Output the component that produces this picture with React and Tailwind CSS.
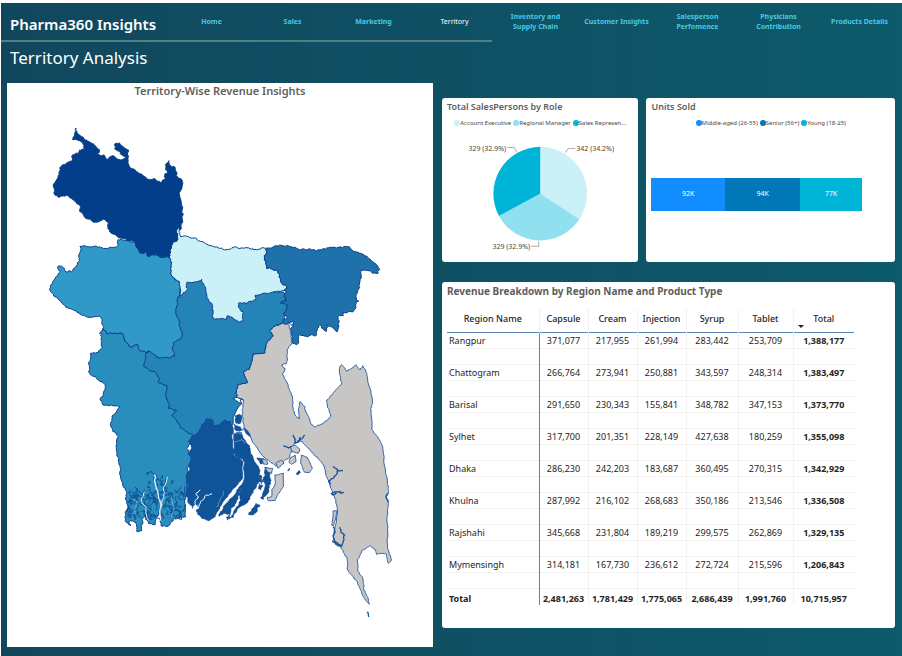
const NAV = [
  ['Home'],
  ['Sales'],
  ['Marketing'],
  ['Territory'],
  ['Inventory and', 'Supply Chain'],
  ['Customer Insights'],
  ['Salesperson', 'Perfomence'],
  ['Physicians', 'Contribution'],
  ['Products Details'],
];

const COLUMNS = ['Capsule', 'Cream', 'Injection', 'Syrup', 'Tablet', 'Total'];

const ROWS = [
  ['Rangpur', '371,077', '217,955', '261,994', '283,442', '253,709', '1,388,177'],
  ['Chattogram', '266,764', '273,941', '250,881', '343,597', '248,314', '1,383,497'],
  ['Barisal', '291,650', '230,343', '155,841', '348,782', '347,153', '1,373,770'],
  ['Sylhet', '317,700', '201,351', '228,149', '427,638', '180,259', '1,355,098'],
  ['Dhaka', '286,230', '242,203', '183,687', '360,495', '270,315', '1,342,929'],
  ['Khulna', '287,992', '216,102', '268,683', '350,186', '213,546', '1,336,508'],
  ['Rajshahi', '345,668', '231,804', '189,219', '299,575', '262,869', '1,329,135'],
  ['Mymensingh', '314,181', '167,730', '236,612', '272,724', '215,596', '1,206,843'],
];

const TOTALS = ['2,481,263', '1,781,429', '1,775,065', '2,686,439', '1,991,760', '10,715,957'];

const UNITS = [
  { label: 'Middle-aged (26-55)', value: 92, color: 'bg-[#118dff]' },
  { label: 'Senior (56+)', value: 94, color: 'bg-[#0077b6]' },
  { label: 'Young (18-25)', value: 77, color: 'bg-[#00b4d8]' },
];

const ROLES = [
  { label: 'Account Executive', color: 'bg-[#caf0f8]' },
  { label: 'Regional Manager', color: 'bg-[#90e0ef]' },
  { label: 'Sales Represen...', color: 'bg-[#00b4d8]' },
];

/* ---------- map geometry ---------- */

// Repeatable noise in the range -1..1, so neighbours share the same ragged border.
const noise = (a, b) => {
  const s = Math.sin(a * 12.9898 + b * 78.233) * 43758.5453;
  return (s - Math.floor(s)) * 2 - 1;
};

const subdivide = (pts, closed, amp) => {
  const out = [];
  const n = closed ? pts.length : pts.length - 1;
  for (let i = 0; i < n; i++) {
    const p = pts[i];
    const q = pts[(i + 1) % pts.length];
    out.push(p);
    if (Math.hypot(q[0] - p[0], q[1] - p[1]) > 6) {
      const sx = Math.round(p[0] + q[0]);
      const sy = Math.round(p[1] + q[1]);
      out.push([sx / 2 + noise(sx, sy) * amp, sy / 2 + noise(sy, sx) * amp]);
    }
  }
  if (!closed) out.push(pts[pts.length - 1]);
  return out;
};

const outline = (text, dx, dy, { closed = true, amp = 3 } = {}) => {
  let pts = text.split(' ').map((pair) => {
    const [x, y] = pair.split(',').map(Number);
    return [x + dx, y + dy];
  });
  if (amp) {
    pts = subdivide(pts, closed, amp * 0.8);
    pts = subdivide(pts, closed, amp * 0.9);
    pts = subdivide(pts, closed, amp * 0.7);
  }
  return 'M' + pts.map((p) => p[0].toFixed(1) + ' ' + p[1].toFixed(1)).join('L') + (closed ? 'Z' : '');
};

const DHAKA =
  '541,888 552,868 562,845 610,838 640,880 720,905 760,880 850,876 862,920 850,970 830,990 850,1080 760,1190 708,1192 725,1208 710,1230 700,1250 700,1268 690,1300 570,1320 520,1260 470,1160 430,1110 435,1055 500,1030 500,900 530,894';

const RAJSHAHI =
  '245,358 285,368 292,385 302,400 318,396 325,410 345,404 360,412 388,413 392,435 392,460 405,480 418,485 420,525 412,535 410,560 410,590 418,600 420,625 428,640 424,654 400,668 397,690 405,708 385,714 350,712 330,694 318,698 302,694 292,674 270,680 255,665 245,640 215,640 200,640 188,628 186,602 178,588 150,592 110,576 75,557 45,530 28,508 32,495 45,475 60,455 53,440 65,438 75,452 95,455 108,440 118,415 120,378 150,382 165,378 195,385 230,380 233,362';

const RANGPUR =
  '108,25 111,38 125,50 135,60 150,66 165,77 178,95 168,108 190,105 200,118 215,108 232,118 250,117 258,110 246,106 238,94 224,87 223,73 236,69 250,80 266,94 264,115 270,142 295,158 320,178 345,176 362,188 372,180 374,162 383,158 377,145 380,130 387,122 391,136 406,145 412,170 427,182 426,200 418,222 428,262 427,300 420,330 415,320 410,338 411,362 398,370 390,392 388,413 360,412 345,404 325,410 318,396 302,400 292,385 285,368 270,362 245,356 230,348 212,338 204,322 206,308 192,298 170,307 140,296 122,276 122,260 100,240 80,226 55,232 43,222 40,198 48,180 58,165 60,142 78,132 98,122 98,105 118,90 135,86 130,65 112,60 97,58';

const KHULNA =
  '188,118 200,130 215,130 245,130 255,155 270,170 292,164 302,184 318,188 325,182 318,200 312,225 325,238 345,245 358,265 355,278 380,285 378,320 390,345 385,355 410,362 395,375 420,408 445,430 458,436 455,460 440,475 450,490 455,510 445,530 440,560 440,600 437,625 437,680 400,688 385,708 364,708 362,690 362,650 345,705 325,700 318,680 306,685 305,722 290,724 285,695 265,695 272,708 255,692 256,670 268,655 256,625 260,608 245,575 242,540 235,510 228,470 235,440 222,425 213,410 216,378 240,350 215,345 190,345 180,330 190,310 196,285 175,270 150,250 148,215 152,190 175,188 187,172 185,140 178,130';

const MYMENSINGH_INLAND =
  '60,85 80,88 110,82 150,86 165,88 200,85 195,105 200,145 232,152 238,168 245,190 260,200 255,212 240,215 200,220 170,226 165,240 140,250 118,248 115,258 130,275 130,302 118,306 105,300 85,287 75,298 45,298 38,285 38,260 20,232 15,200 5,178 -10,185 -40,188 -38,208 -60,227 -62,185 -75,180 -88,160 -88,135 -92,113 -90,92 -82,70 -69,62 -70,38 -65,20 -62,30 -58,50 -35,50 -10,58 20,72';

const SYLHET =
  '200,85 235,78 262,76 300,90 325,87 350,92 380,84 410,84 440,80 465,95 500,108 540,148 535,158 520,160 495,150 483,150 484,175 478,200 472,220 468,240 476,243 468,245 468,262 458,276 428,278 430,288 418,285 415,310 412,335 400,325 380,315 378,335 358,315 352,325 350,345 325,350 295,345 292,372 278,370 275,345 272,325 282,312 262,312 245,310 250,298 262,290 250,282 260,270 262,255 242,250 258,240 250,228 255,212 260,200 245,190 238,168 232,152 200,145 195,105';

const CHATTOGRAM =
  '245,310 268,316 272,340 275,370 262,390 262,420 258,432 245,435 255,445 248,465 265,495 275,525 280,565 285,585 298,597 295,570 300,545 315,560 330,605 345,622 370,610 393,590 385,565 380,540 400,518 425,493 418,450 424,434 440,454 455,445 468,434 480,450 488,437 497,450 505,490 518,550 512,565 515,628 535,655 548,680 552,730 562,790 566,820 558,825 565,850 561,890 562,970 574,1020 565,1030 557,1000 530,1003 525,988 512,978 485,992 472,1018 472,1050 488,1075 490,1105 502,1130 508,1153 490,1130 472,1085 443,1050 440,1010 422,982 408,975 400,950 405,920 412,870 403,830 390,790 380,770 370,735 340,700 310,670 300,662 285,670 275,685 265,715 245,730 235,742 210,725 185,705 160,670 148,640 132,620 128,580 128,555 132,540 110,530 108,520 115,492 143,488 130,455 148,448 155,425 158,402 195,398 200,370 220,348 208,332 230,315';

const BARISAL = [
  '65,168 75,165 88,150 100,130 110,118 130,120 132,138 152,132 165,120 182,128 190,148 186,165 190,225 219,245 218,295 180,340 150,380 135,410 120,420 95,415 80,395 88,380 75,370 68,385 57,370 50,350 52,300 48,290 60,270 58,250 65,235 55,220 65,200 55,185',
  '190,160 215,158 225,180 240,215 268,268 264,310 240,350 228,368 208,378 210,350 222,300 225,245 195,225',
  '218,312 208,345 190,380 180,405 165,400 146,408 160,380 200,335',
  '238,352 220,376 204,385 190,412 184,412 200,380 212,372',
  '274,310 282,290 285,262 300,280 302,310 296,330 280,358 272,352 285,325 283,300',
  '268,286 276,290 272,306 266,300',
  '268,312 278,316 272,330 266,326',
  '248,385 258,370 269,375 262,392 250,404 236,404',
  '262,234 278,236 290,250 272,252',
  '196,108 206,104 215,112 210,130 198,130',
  '222,144 236,152 242,172 228,160',
  '226,190 238,196 242,214 232,208',
  '192,132 206,140 218,150 200,152',
  '170,412 178,404 182,412 172,420',
];

const GREY_ISLANDS = [
  '315,285 340,280 340,320 320,350 315,362 295,362 292,352 305,350 305,330 315,315',
  '395,226 412,232 427,265 418,278 402,275 392,250',
  '362,200 375,195 390,208 385,220 365,215',
  '360,235 375,225 378,245 365,253 358,248',
  '318,250 335,240 342,250 325,265',
  '286,262 308,265 305,280 293,275',
  '275,236 290,242 294,252 280,252',
];

const CREEKS = [
  '150,402 146,392 160,385 172,368 174,360 160,350',
  '172,362 187,362',
  '154,430 170,426 180,424 182,430 190,427',
  '156,433 168,430',
  '160,532 166,545 160,560 166,575 184,590 190,572 194,556 184,548 180,533',
  '158,573 166,580 180,586',
  '12,288 26,294 34,290',
  '40,256 46,268 44,278 56,276 60,262',
  '54,272 66,266 73,256',
  '322,432 318,440 325,455',
  '262,787 265,790 266,799',
  '24,362 28,356',
  '50,372 58,363 60,368 52,373',
];

const buildMangroves = () => {
  const lines = [];
  for (let i = 0; i < 120; i++) {
    let x = 262 + ((noise(i, 3) + 1) / 2) * 172;
    const top = x < 320 ? 588 : x < 345 ? 548 : x < 400 ? 560 : 590;
    let y = top + ((noise(3, i) + 1) / 2) * (680 - top);
    const pts = [[x, y]];
    for (let k = 0; k < 5; k++) {
      x += noise(i + 11, k + 1) * 7;
      y += 2 + noise(k + 1, i + 7) * 8;
      x = Math.min(434, Math.max(260, x));
      y = Math.min(688, y);
      pts.push([x, y]);
    }
    lines.push('M' + pts.map((p) => (p[0] + 120).toFixed(1) + ' ' + (p[1] + 870).toFixed(1)).join('L'));
  }
  return lines.join('');
};

const MANGROVES = buildMangroves();

function TerritoryMap() {
  return (
    <svg viewBox="21 297 1278 1644" className="block w-full" role="img" aria-label="Territory map" strokeLinejoin="round" strokeLinecap="round">
      <g stroke="#0b3f8c" strokeWidth="3">
        <path d={outline(DHAKA, 0, 0, { amp: 2 })} fill="#2483b7" />
        <path d={outline(MYMENSINGH_INLAND, 600, 660)} fill="#caf0f8" />
        <path d={outline(RAJSHAHI, 120, 360)} fill="#3099c7" />
        <path d={outline(RANGPUR, 120, 360)} fill="#023e8a" />
        <path d={outline(KHULNA, 120, 870)} fill="#2a8ebd" />
        <path d={outline(SYLHET, 600, 660)} fill="#1e71ab" />
      </g>
      <path d={MANGROVES} fill="none" stroke="#0f5499" strokeWidth="3" />
      <g fill="none" stroke="#e6f0f8" strokeWidth="4">
        <path d={outline('362,690 362,640 352,600 344,575 344,555', 120, 870, { closed: false })} />
        <path d={outline('362,650 372,625 370,600 382,562', 120, 870, { closed: false })} strokeWidth="3" />
        <path d={outline('325,690 318,655 305,625 315,605', 120, 870, { closed: false })} strokeWidth="3" />
        <path d={outline('290,690 285,660 292,635 272,625', 120, 870, { closed: false })} strokeWidth="1" />
        <path d={outline('395,680 402,655 395,620', 120, 870, { closed: false })} strokeWidth="1" />
      </g>
      <g stroke="#0b3f8c" strokeWidth="2">
        {BARISAL.map((points) => (
          <path key={points} d={outline(points, 510, 1140)} fill="#0f5499" />
        ))}
      </g>
      <g fill="none" stroke="#ffffff" strokeWidth="3">
        <path d={outline('75,370 85,350 78,340 90,330', 510, 1140, { closed: false })} />
        <path d={outline('84,386 95,362 110,345 125,342', 510, 1140, { closed: false })} />
        <path d={outline('160,335 148,365 140,380', 510, 1140, { closed: false })} strokeWidth="1" />
        <path d={outline('186,165 205,158 222,160', 510, 1140, { closed: false })} strokeWidth="1" />
        <path d={outline('196,185 215,178 226,190', 510, 1140, { closed: false })} strokeWidth="1" />
      </g>
      <g stroke="#2f62a6" strokeWidth="3" fill="#c8c6c4">
        <path d={outline(CHATTOGRAM, 600, 660, { amp: 2 })} />
        {GREY_ISLANDS.map((points) => (
          <path key={points} d={outline(points, 510, 1140, { amp: 1 })} />
        ))}
        <path d={outline('160,483 170,482 168,500 160,528 155,525 158,505', 840, 1050, { amp: 1 })} />
      </g>
      <g fill="#ffffff" stroke="#0b3f8c" strokeWidth="3">
        <path d={outline('190,55 202,52 218,58 210,60 216,72 204,66', 510, 1140, { amp: 1 })} />
        <path d={outline('266,308 282,305 276,316', 600, 660, { amp: 1 })} />
      </g>
      <path
        d={outline('245,310 230,315 208,332 220,348 200,370 195,398 158,402 155,425 148,448 130,455 143,488 115,492 108,520 110,530', 600, 660, { closed: false, amp: 2 })}
        fill="none"
        stroke="#0b3f8c"
        strokeWidth="3"
      />
      <g fill="none" stroke="#1b5299" strokeWidth="4">
        {CREEKS.map((points) => (
          <path key={points} d={outline(points, 840, 1050, { closed: false, amp: 2 })} />
        ))}
      </g>
    </svg>
  );
}

function Legend({ items }) {
  return (
    <ul className="flex justify-center gap-[2px] text-[6px] leading-[8px] text-[#484644]">
      {items.map((item) => (
        <li key={item.label} className="flex items-center whitespace-nowrap">
          <span className={`size-[6px] rounded-full ${item.color}`} />
          {item.label}
        </li>
      ))}
    </ul>
  );
}

function RolePie() {
  return (
    <svg viewBox="442 131 196 131" className="block w-full" role="img" aria-label="Sales persons by role">
      <path d="M540 193.5V146.8A46.7 46.7 0 0 1 579.1 219Z" fill="#caf0f8" />
      <path d="M540 193.5L579.1 219A46.7 46.7 0 0 1 498.9 215.7Z" fill="#90e0ef" />
      <path d="M540 193.5L498.9 215.7A46.7 46.7 0 0 1 540 146.8Z" fill="#00b4d8" />
      <g fill="none" stroke="#b3b0ad">
        <path d="M507 147.5H514L517 152.5" />
        <path d="M575 148.5H568L565 152.5" />
        <path d="M531 246H538.5V241" />
      </g>
      <g fill="#484644" fontSize="7">
        <text x="506" y="151" textAnchor="end">329 (32.9%)</text>
        <text x="576" y="151">342 (34.2%)</text>
        <text x="530" y="249" textAnchor="end">329 (32.9%)</text>
      </g>
    </svg>
  );
}

function RevenueTable() {
  return (
    <table className="w-full table-fixed border-collapse text-center text-[9px] leading-[12px] text-[#252423]">
      <colgroup>
        <col className="w-[92px]" />
        <col className="w-[49px]" />
        <col className="w-[49px]" />
        <col className="w-[49px]" />
        <col className="w-[52px]" />
        <col className="w-[55px]" />
        <col className="w-[61px]" />
      </colgroup>
      <thead>
        <tr className="h-[23px] border-b border-[#5b83b5]">
          <th scope="col" className="border-r border-[#f3f2f1] p-0 pb-1 font-medium">Region Name</th>
          {COLUMNS.map((name) => (
            <th key={name} scope="col" className="relative border-r border-[#f3f2f1] p-0 pb-1 font-medium last:border-r-0">
              {name === 'Total' && (
                <svg viewBox="0 0 6 3" className="absolute bottom-1 left-1 h-[3px] w-[6px]" aria-hidden="true">
                  <path d="M0 0H6L3 3Z" fill="#252423" />
                </svg>
              )}
              {name}
            </th>
          ))}
        </tr>
      </thead>
      {ROWS.map(([region, ...values]) => (
        <tbody key={region}>
          <tr className="h-4 border-b border-[#f3f2f1]">
            <th scope="row" className="border-r border-[#5b83b5] p-0 pt-[2px] pl-[2px] text-left font-normal">{region}</th>
            {values.map((value, i) => (
              <td key={COLUMNS[i]} className="border-r border-[#f3f2f1] p-0 pt-[2px] last:border-r-0 last:font-bold">{value}</td>
            ))}
          </tr>
          <tr className="h-4 border-b border-[#f3f2f1]" aria-hidden="true">
            <td className="border-r border-[#5b83b5] p-0" />
            {COLUMNS.map((name) => (
              <td key={name} className="border-r border-[#f3f2f1] p-0 last:border-r-0" />
            ))}
          </tr>
        </tbody>
      ))}
      <tfoot>
        <tr className="h-[17px] font-bold">
          <th scope="row" className="border-r border-[#5b83b5] p-0 pt-[3px] pl-[2px] text-left">Total</th>
          {TOTALS.map((value, i) => (
            <td key={COLUMNS[i]} className="border-r border-[#f3f2f1] p-0 pt-[3px] last:border-r-0">{value}</td>
          ))}
        </tr>
      </tfoot>
    </table>
  );
}

export default function App() {
  return (
    <div className="min-h-screen bg-white pt-[3px] pl-px font-['Noto_Sans','Open_Sans',sans-serif]">
      <div className="min-h-[calc(100vh-3px)] bg-linear-to-r from-[#11475d] to-[#0c5a6b] pb-[9px]">
        <header>
          <div className="flex h-[37px] items-center">
            <div className="w-[170px] shrink-0 pt-1 pl-[9px] text-[15px] leading-5 font-semibold whitespace-nowrap text-white">Pharma360 Insights</div>
            <nav className="grid flex-1 grid-cols-9 items-center pt-px pr-[2px] text-center text-[7px] leading-[10px]">
              {NAV.map((lines) => (
                <a
                  key={lines[0]}
                  href="#"
                  aria-current={lines[0] === 'Territory' ? 'page' : undefined}
                  className="font-bold whitespace-nowrap text-[#48cae4] aria-[current=page]:font-normal aria-[current=page]:text-white"
                >
                  {lines.map((line) => (
                    <span key={line} className="block">{line}</span>
                  ))}
                </a>
              ))}
            </nav>
          </div>
          <div className="h-[2px] w-6/11 bg-[#4f8086]" />
          <h1 className="pt-1 pb-[13px] pl-[9px] text-[17px] leading-6 text-white">Territory Analysis</h1>
        </header>

        <main className="grid grid-cols-[426fr_453fr] items-start gap-[9px] pr-[7px] pl-[6px]">
          <section className="bg-white">
            <h2 className="text-center text-[11px] leading-[16px] font-semibold text-[#605e5c]">Territory-Wise Revenue Insights</h2>
            <TerritoryMap />
          </section>

          <div className="grid gap-5 pt-[15px]">
            <div className="grid grid-cols-[196fr_248fr] gap-2">
              <section className="rounded-[3px] bg-white">
                <h2 className="px-[5px] pt-px text-[9px] leading-[16px] font-semibold text-[#605e5c]">Total SalesPersons by Role</h2>
                <div className="py-1">
                  <Legend items={ROLES} />
                </div>
                <RolePie />
              </section>
              <section className="flex flex-col rounded-[3px] bg-white px-[5px]">
                <h2 className="pt-px text-[9px] leading-[16px] font-semibold text-[#605e5c]">Units Sold</h2>
                <div className="pt-1">
                  <Legend items={UNITS} />
                </div>
                <div className="flex flex-1 items-center pr-7">
                  <div className="flex h-[33px] w-full">
                    {UNITS.map((unit) => (
                      <div
                        key={unit.label}
                        className={`flex basis-0 items-center justify-center text-[7px] text-white ${unit.color}`}
                        style={{ flexGrow: unit.value }}
                      >
                        {unit.value}K
                      </div>
                    ))}
                  </div>
                </div>
              </section>
            </div>

            <section className="rounded-[3px] bg-white pt-px pr-[41px] pb-[23px] pl-[5px]">
              <h2 className="pb-[10px] text-[10px] leading-[16px] font-bold text-[#605e5c]">Revenue Breakdown by Region Name and Product Type</h2>
              <RevenueTable />
            </section>
          </div>
        </main>
      </div>
    </div>
  );
}
